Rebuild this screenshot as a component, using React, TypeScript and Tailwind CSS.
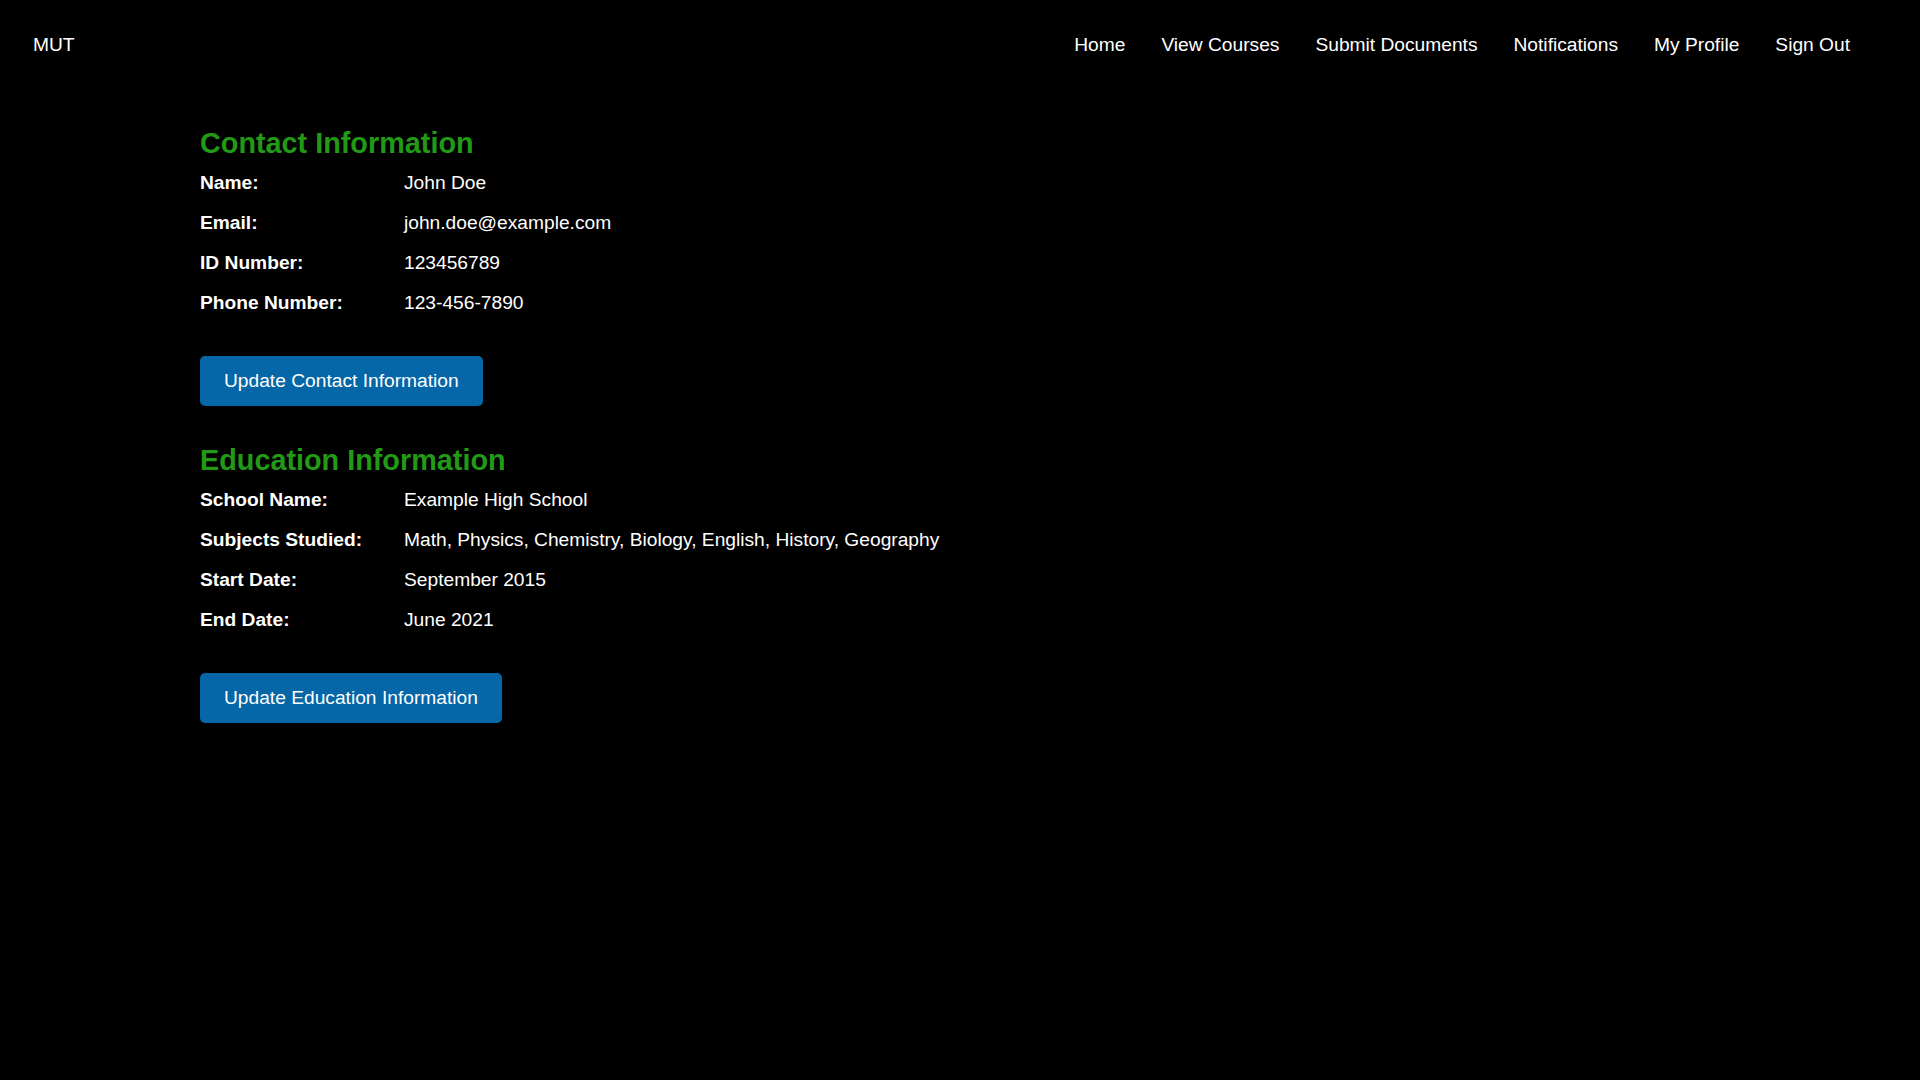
const navLinks = ['Home', 'View Courses', 'Submit Documents', 'Notifications', 'My Profile', 'Sign Out'];

const contact = [
  { label: 'Name:', value: 'John Doe' },
  { label: 'Email:', value: 'john.doe@example.com' },
  { label: 'ID Number:', value: '123456789' },
  { label: 'Phone Number:', value: '123-456-7890' },
];

const education = [
  { label: 'School Name:', value: 'Example High School' },
  { label: 'Subjects Studied:', value: 'Math, Physics, Chemistry, Biology, English, History, Geography' },
  { label: 'Start Date:', value: 'September 2015' },
  { label: 'End Date:', value: 'June 2021' },
];

function InfoSection({ title, rows, button }: { title: string; rows: { label: string; value: string }[]; button: string }) {
  return (
    <section className="mb-[38px]">
      <h2 className="text-[28.8px] font-bold leading-[32px] text-[#229a16]">{title}</h2>
      <div className="mt-[4px] grid grid-cols-[204px_1fr]">
        {rows.map((row) => (
          <div key={row.label} className="contents">
            <div className="flex h-[40px] items-center font-bold">{row.label}</div>
            <div className="flex h-[40px] items-center">{row.value}</div>
          </div>
        ))}
      </div>
      <button className="mt-[33px] h-[50px] rounded-[5px] bg-[#0566a8] px-[24px] text-white">
        {button}
      </button>
    </section>
  );
}

export default function App() {
  return (
    <div
      className="min-h-screen bg-black text-[19.2px] text-white"
      style={{ fontFamily: '"Liberation Sans", Arial, sans-serif' }}
    >
      {/* Top nav */}
      <nav className="flex h-[90px] items-center justify-between pl-[33px] pr-[70px]">
        <span>MUT</span>
        <ul className="flex gap-[36px]">
          {navLinks.map((link) => (
            <li key={link}>
              <a href="#">{link}</a>
            </li>
          ))}
        </ul>
      </nav>

      <main className="px-[200px] pt-[37px]">
        <InfoSection title="Contact Information" rows={contact} button="Update Contact Information" />
        <InfoSection title="Education Information" rows={education} button="Update Education Information" />
      </main>
    </div>
  );
}
